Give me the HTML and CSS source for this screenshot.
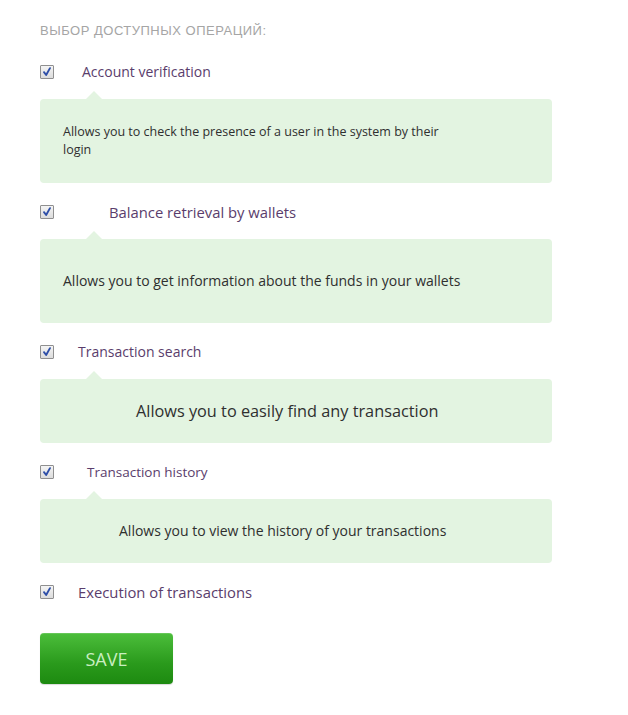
FILE: index.html
```html
<!DOCTYPE html>
<html lang="en">
<head>
<meta charset="utf-8">
<title>Operations</title>
<link rel="stylesheet" href="styles.css">
</head>
<body>
<div class="page">
  <h2 class="title">Выбор доступных операций:</h2>

  <div class="row row-first">
    <span class="check"><svg viewBox="0 0 14 14" width="14" height="14"><path d="M3.5 7.2 L6 10.5 L10.5 2.5" fill="none" stroke="#2f4fa8" stroke-width="2.2" stroke-linecap="round" stroke-linejoin="round"/></svg></span>
    <span class="label l1">Account verification</span>
  </div>
  <div class="tip tip-tall">
    <p class="tip-text t1">Allows you to check the presence of a user in the system by their login</p>
  </div>

  <div class="row">
    <span class="check"><svg viewBox="0 0 14 14" width="14" height="14"><path d="M3.5 7.2 L6 10.5 L10.5 2.5" fill="none" stroke="#2f4fa8" stroke-width="2.2" stroke-linecap="round" stroke-linejoin="round"/></svg></span>
    <span class="label l2">Balance retrieval by wallets</span>
  </div>
  <div class="tip tip-tall">
    <p class="tip-text t2">Allows you to get information about the funds in your wallets</p>
  </div>

  <div class="row">
    <span class="check"><svg viewBox="0 0 14 14" width="14" height="14"><path d="M3.5 7.2 L6 10.5 L10.5 2.5" fill="none" stroke="#2f4fa8" stroke-width="2.2" stroke-linecap="round" stroke-linejoin="round"/></svg></span>
    <span class="label l3">Transaction search</span>
  </div>
  <div class="tip tip-short">
    <p class="tip-text t3">Allows you to easily find any transaction</p>
  </div>

  <div class="row">
    <span class="check"><svg viewBox="0 0 14 14" width="14" height="14"><path d="M3.5 7.2 L6 10.5 L10.5 2.5" fill="none" stroke="#2f4fa8" stroke-width="2.2" stroke-linecap="round" stroke-linejoin="round"/></svg></span>
    <span class="label l4">Transaction history</span>
  </div>
  <div class="tip tip-short">
    <p class="tip-text t4">Allows you to view the history of your transactions</p>
  </div>

  <div class="row">
    <span class="check"><svg viewBox="0 0 14 14" width="14" height="14"><path d="M3.5 7.2 L6 10.5 L10.5 2.5" fill="none" stroke="#2f4fa8" stroke-width="2.2" stroke-linecap="round" stroke-linejoin="round"/></svg></span>
    <span class="label l5">Execution of transactions</span>
  </div>

  <button class="save" type="button">Save</button>
</div>
</body>
</html>
```

FILE: styles.css
```css
html, body {
  margin: 0;
  padding: 0;
  background: #ffffff;
}

.page {
  padding: 24px 0 30px 40px;
  width: 512px;
  font-family: "Open Sans", "Noto Sans", sans-serif;
}

.title {
  margin: 0;
  font-family: "Liberation Sans", Arial, sans-serif;
  font-weight: normal;
  font-size: 13px;
  line-height: 14px;
  text-transform: uppercase;
  color: #a5a5a5;
  letter-spacing: 0.5px;
}

.row {
  display: flex;
  align-items: center;
  height: 14px;
  margin-top: 22px;
}

.row-first {
  margin-top: 27px;
}

.check {
  box-sizing: border-box;
  width: 14px;
  height: 14px;
  flex: none;
  border: 1px solid #8f8f8f;
  border-radius: 1px;
  background: linear-gradient(#f4f4f4, #dcdcdc);
  display: flex;
  align-items: center;
  justify-content: center;
}

.check svg {
  width: 12px;
  height: 12px;
}

.label {
  color: #5a3d6c;
  font-size: 14px;
  line-height: 14px;
  white-space: nowrap;
}

.l1 { margin-left: 28px; }
.l2 { margin-left: 55px; font-size: 14.8px; }
.l3 { margin-left: 24px; }
.l4 { margin-left: 33px; font-size: 13.5px; }
.l5 { margin-left: 24px; font-size: 14.8px; }

.tip {
  position: relative;
  margin-top: 20px;
  background: #e3f4e1;
  border-radius: 4px;
  box-sizing: border-box;
  display: flex;
  align-items: center;
}

.tip::before {
  content: "";
  position: absolute;
  left: 46px;
  top: -8px;
  border-left: 8px solid transparent;
  border-right: 8px solid transparent;
  border-bottom: 8px solid #e3f4e1;
}

.tip-tall { height: 84px; }
.tip-short { height: 64px; }

.tip-text {
  margin: 0;
  color: #2f2f2f;
}

.t1 {
  padding-left: 23px;
  font-size: 12.5px;
  line-height: 18px;
  max-width: 392px;
}

.t2 {
  padding-left: 23px;
  font-size: 14px;
  line-height: 18px;
}

.t3 {
  padding-left: 96px;
  font-size: 16.3px;
  line-height: 20px;
}

.t4 {
  padding-left: 79px;
  font-size: 14px;
  line-height: 18px;
}

.save {
  display: block;
  margin-top: 34px;
  width: 133px;
  height: 51px;
  border: none;
  border-radius: 4px;
  background: linear-gradient(#4cbe3b, #2a9a1c 60%, #1d8a10);
  box-shadow: inset 0 1px 0 rgba(255,255,255,0.15), 0 1px 1px rgba(0,0,0,0.15);
  color: #c9eec1;
  font-family: "Open Sans", "Noto Sans", sans-serif;
  font-size: 18px;
  text-transform: uppercase;
  padding: 0;
  cursor: pointer;
}
```
